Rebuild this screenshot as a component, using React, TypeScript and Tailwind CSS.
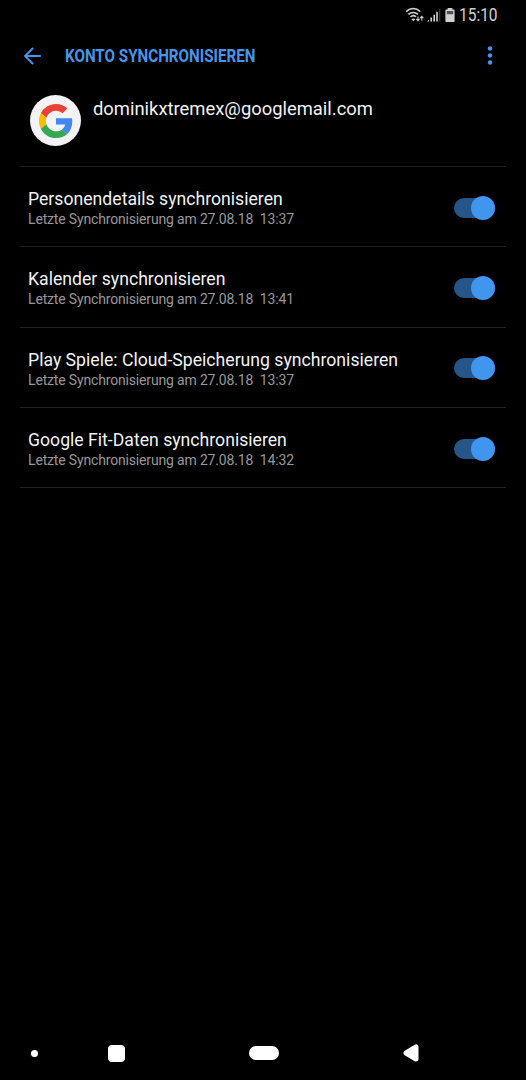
import React, { useState } from 'react';

interface SyncItem {
  id: string;
  title: string;
  lastSync: string;
}

const ITEMS: SyncItem[] = [
  { id: 'people', title: 'Personendetails synchronisieren', lastSync: '27.08.18  13:37' },
  { id: 'calendar', title: 'Kalender synchronisieren', lastSync: '27.08.18  13:41' },
  { id: 'games', title: 'Play Spiele: Cloud-Speicherung synchronisieren', lastSync: '27.08.18  13:37' },
  { id: 'fit', title: 'Google Fit-Daten synchronisieren', lastSync: '27.08.18  14:32' },
];

function StatusBar() {
  return (
    <div className="flex h-[30px] items-center pl-[405px] text-[#d0d0d0]">
      {/* Wifi with up/down arrows */}
      <svg width="20" height="16" viewBox="0 0 20 16" className="shrink-0" fill="none" stroke="currentColor" strokeWidth="1.5">
        <path d="M1.2 4.6C5.3.6 11.1.6 15.2 4.6" />
        <path d="M3.4 7.4c2.7-2.7 6.9-2.7 9.6 0" />
        <path d="M5.5 10c1.6-1.6 3.9-1.6 5.5-.2" />
        <path d="M6.4 12.2c1.2-1.1 2.8-1.1 4 0l-2 2z" fill="currentColor" stroke="none" />
        <path d="M13 9.4v4M11.4 12l1.6 1.7 1.6-1.7M16.8 13.7V9.4M15.2 11.1l1.6-1.7 1.6 1.7" strokeWidth="1.1" />
      </svg>
      <svg width="14" height="14" viewBox="0 0 14 14" className="ml-[2px] shrink-0" fill="currentColor">
        <path d="M0 13.4L2 11.4v2zM3.4 9.6H5v3.8H3.4zM6.4 6.8H8v6.6H6.4zM9.2 3.7h1.6v9.7H9.2z" />
        <path d="M12.2.8h1.1v12.6h-1.1z" opacity=".35" />
      </svg>
      <svg width="10" height="14" viewBox="0 0 10 14" className="ml-1 shrink-0" fill="currentColor">
        <path d="M2.6 0h4.8v1.6h1.4q.8 0 .8.8v10.8q0 .8-.8.8H1.2q-.8 0-.8-.8V2.4q0-.8.8-.8h1.4z" />
        <path d="M1.8 3h6.4v3.2H1.8z" fill="#505050" />
      </svg>
      <span className="ml-1 origin-left scale-x-[.86] text-[18px] leading-[30px]">15:10</span>
    </div>
  );
}

function Header() {
  return (
    <header className="flex h-[52px] items-center pl-6 text-[#4596ea]">
      <svg width="17" height="18" viewBox="0 0 17 18" className="shrink-0" fill="none" stroke="currentColor" strokeWidth="1.9" strokeLinecap="round" strokeLinejoin="round">
        <path d="M16.2 9H1M8.6 1.5L1 9l7.6 7.5" />
      </svg>
      <h1 className="ml-6 w-[405px] origin-left scale-x-[.867] pt-px whitespace-nowrap text-[17.5px] font-bold">KONTO SYNCHRONISIEREN</h1>
      <svg width="6" height="20" viewBox="0 0 6 20" className="ml-[17px] shrink-0" fill="currentColor">
        <circle cx="3" cy="2.5" r="2.2" />
        <circle cx="3" cy="9.5" r="2.2" />
        <circle cx="3" cy="16.5" r="2.2" />
      </svg>
    </header>
  );
}

function GoogleLogo() {
  return (
    <div className="flex size-[51px] shrink-0 items-center justify-center rounded-full bg-[#f3f3f5]">
      <svg width="34" height="34" viewBox="0 0 48 48">
        <path fill="#EA4335" d="M24 9.5c3.54 0 6.71 1.22 9.21 3.6l6.85-6.85C35.9 2.38 30.47 0 24 0 14.62 0 6.51 5.38 2.56 13.22l7.98 6.19C12.43 13.72 17.74 9.5 24 9.5z" />
        <path fill="#4285F4" d="M46.98 24.55c0-1.57-.15-3.09-.38-4.55H24v9.02h12.94c-.58 2.96-2.26 5.48-4.78 7.18l7.73 6c4.51-4.18 7.09-10.36 7.09-17.65z" />
        <path fill="#FBBC05" d="M10.53 28.59c-.48-1.45-.76-2.99-.76-4.59s.27-3.14.76-4.59l-7.98-6.19C.92 16.46 0 20.12 0 24c0 3.88.92 7.54 2.56 10.78l7.97-6.19z" />
        <path fill="#34A853" d="M24 48c6.48 0 11.93-2.13 15.89-5.81l-7.73-6c-2.15 1.45-4.92 2.3-8.16 2.3-6.26 0-11.57-4.22-13.47-9.91l-7.98 6.19C6.51 42.62 14.62 48 24 48z" />
      </svg>
    </div>
  );
}

function Toggle({ on, onClick }: { on: boolean; onClick: () => void }) {
  return (
    <button
      role="switch"
      aria-checked={on}
      onClick={onClick}
      className={`flex h-5 w-[41px] shrink-0 items-center rounded-full ${on ? 'justify-end bg-[#265687]' : 'justify-start bg-neutral-700'}`}
    >
      <span className={`size-6 shrink-0 rounded-full ${on ? 'bg-[#4095ee]' : 'bg-neutral-400'}`} />
    </button>
  );
}

function NavBar() {
  return (
    <nav className="mt-auto flex h-[54px] items-center text-white">
      <span className="ml-[31px] size-[7px] rounded-full bg-white" />
      <span className="ml-[70px] size-[17px] rounded-[4px] bg-white" />
      <span className="ml-[124px] h-[14px] w-[30px] rounded-full bg-white" />
      <svg width="16" height="18" viewBox="0 0 16 18" className="ml-[124px]" fill="currentColor" stroke="currentColor" strokeWidth="5" strokeLinejoin="round">
        <path d="M3 9l10-6v12z" />
      </svg>
    </nav>
  );
}

export default function App() {
  const [enabled, setEnabled] = useState<Record<string, boolean>>({
    people: true,
    calendar: true,
    games: true,
    fit: true,
  });

  const toggle = (id: string) => setEnabled(prev => ({ ...prev, [id]: !prev[id] }));

  return (
    <div className="flex h-[1080px] w-[526px] flex-col overflow-hidden bg-black font-['Roboto',sans-serif]">
      <StatusBar />
      <Header />

      <section className="mx-5 flex h-[85px] border-b border-[#222222] pt-[13px] pl-[10px]">
        <GoogleLogo />
        <p className="ml-3 text-[18.4px] leading-[27px] text-[#f2f2f2]">dominikxtremex@googlemail.com</p>
      </section>

      <ul className="mx-5">
        {ITEMS.map(item => (
          <li key={item.id} className="flex h-[80.3px] items-center border-b border-[#222222] pt-[2px] pr-[11px] pl-2">
            <div className="flex-1 pt-[3px]">
              <div className="text-[17.65px] leading-[21px] text-[#f2f2f2]">{item.title}</div>
              <div className="text-[14px] leading-[19px] tracking-[-0.165px] whitespace-pre text-[#989898]">
                Letzte Synchronisierung am {item.lastSync}
              </div>
            </div>
            <Toggle on={enabled[item.id]} onClick={() => toggle(item.id)} />
          </li>
        ))}
      </ul>

      <NavBar />
    </div>
  );
}
